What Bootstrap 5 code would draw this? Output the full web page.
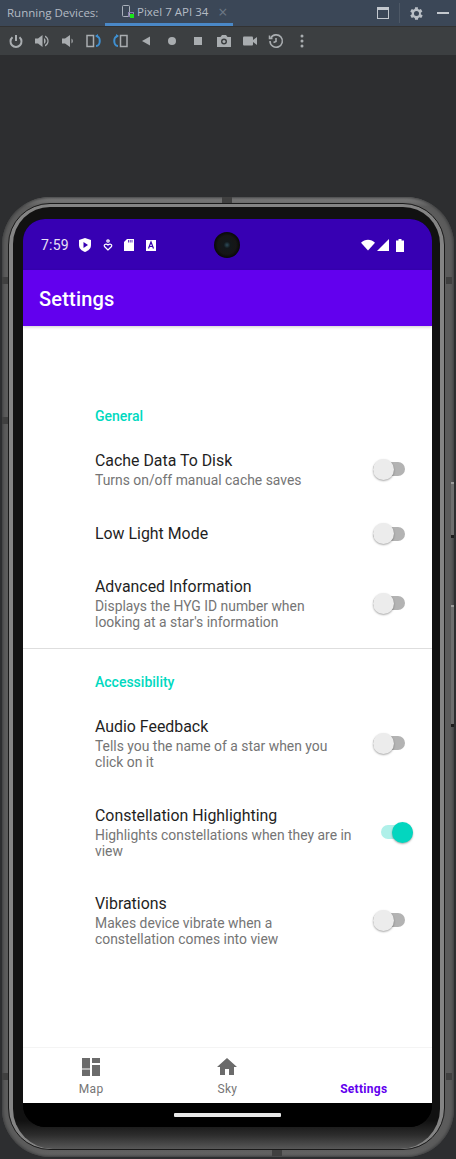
<!DOCTYPE html>
<html lang="en">
<head>
    <meta charset="UTF-8">
    <meta name="viewport" content="width=device-width, initial-scale=1.0">
    <title>Settings</title>
    <link href="https://cdn.jsdelivr.net/npm/bootstrap@5.3.0/dist/css/bootstrap.min.css" rel="stylesheet">
    <style>
        html, body { height: 100%; }
        body { width: 456px; height: 1159px; overflow: hidden; background: #2d2e30; font-family: Roboto, sans-serif; }

        /* IDE chrome */
        .ide-tabs { height: 26px; background: #3b4757; color: #b4bbc4; font-family: "Open Sans", sans-serif; font-size: 11.5px; }
        .ide-label { width: 105px; padding-left: 7px; }
        .ide-tab { width: 128px; height: 26px; border-bottom: 3px solid #4a88c7; padding-left: 16px; gap: 2px; }
        .ide-tab-x { color: #6d7885; margin-left: 8px; font-size: 16px; line-height: 16px; }
        .ide-right { margin-left: auto; gap: 10px; padding-right: 7px; }
        .ide-sep { width: 1px; height: 20px; background: #4d5866; }
        .ide-tools { height: 29px; background: #3c3f41; padding-left: 8px; gap: 10px; border-top: 1px solid #323232; }
        .ide-tools svg { width: 16px; height: 16px; flex: none; }

        /* phone */
        .phone-wrap { padding: 142px 2px 0 2px; }
        .phone-shell { height: 960px; padding: 6px 9px 7px 6px; border-radius: 48px; background: linear-gradient(to bottom, #858585 0, #5c5c5c 1%, #5c5c5c 99%, #666 100%); box-shadow: inset 0 0 3px 1px #3c3d3e; position: relative; }
        .phone-line { height: 947px; border: 1px solid #1a1a1a; border-radius: 42px; background: #848484; padding: 3px 4px 0 4px; overflow: hidden; }
        .phone-bezel { height: 942px; padding: 12px 8px 0 10px; border-radius: 37px 37px 40px 40px; background: linear-gradient(to bottom, #111 0, #111 97%, #2c2c2c 98.500%, #585858 100%); }
        .phone-screen { height: 908px; width: 409px; border-radius: 22px; overflow: hidden; background: #000; position: relative; }

        .shell-rail { position: absolute; right: 0; width: 3px; background: #6e6e6e; border-top: 2px solid #9a9a9a; border-bottom: 3px solid #1c1c1c; }
        .rail-upper { top: 285px; height: 56px; }
        .rail-lower { top: 408px; height: 122px; }
        .shell-notch { position: absolute; background: #404040; }
        .notch-top { left: 220px; top: 0; width: 10px; height: 6px; }
        .notch-bottom { left: 270px; bottom: 1px; width: 10px; height: 6px; }
        .notch-left-a { left: 0; top: 80px; width: 6px; height: 7px; }
        .notch-left-b { left: 0; top: 220px; width: 6px; height: 7px; }
        .notch-left-c { left: 0; top: 876px; width: 6px; height: 7px; }
        .notch-right-a { right: 2px; top: 80px; width: 6px; height: 7px; }
        .notch-right-c { right: 2px; top: 876px; width: 6px; height: 7px; }

        .status-row { height: 51px; background: #3700b3; color: #e8e0f6; padding: 1px 28px 0 18px; font-size: 14px; position: relative; }
        .status-time { width: 35px; letter-spacing: .2px; }
        .status-icons { gap: 11.5px; margin-left: 3px; }
        .status-icons svg, .status-right svg { display: block; }
        .status-right { margin-left: auto; gap: 2px; }
        .status-batt { margin-left: 5px; }
        .punch-hole { position: absolute; left: 191px; top: 13px; width: 26px; height: 26px; border-radius: 50%; background: radial-gradient(circle, #2e4c5a 0, #12181b 18%, #161616 50%, #050505 75%, #000 100%); }
        .app-title { height: 56px; background: #6200ee; color: #fff; font-size: 20px; font-weight: 500; letter-spacing: .2px; padding: 2px 0 0 16px; box-shadow: 0 1px 3px rgba(0,0,0,.2); position: relative; z-index: 1; }

        .settings-body { height: 721px; background: #fff; padding-top: 78px; }
        .group-title { color: #00d9c0; font-size: 14px; font-weight: 500; line-height: 24px; padding-left: 72px; }
        .pref-row { padding-left: 72px; }
        .pref-title { font-size: 15.900px; line-height: 20px; color: #1f1f1f; }
        .pref-sub { font-size: 13.900px; line-height: 16px; color: #757575; margin-top: 1px; padding-right: 4px; }
        .pref-text { width: 262px; padding-top: 1px; }
        .m-cache { margin-top: 22px; }
        .m-low { margin-top: 35px; }
        .m-adv { margin-top: 32px; }
        .m-audio { margin-top: 22px; }
        .m-const { margin-top: 35px; }
        .m-vib { margin-top: 34px; }
        .pref-rule { border: 0; border-top: 1px solid #dedede; opacity: 1; margin: 18px 0 0; }
        .acc-gap { margin-top: 21px; }

        .toggle-box { width: 32px; height: 14px; border-radius: 7px; background: #b3b3b3; position: relative; margin-left: 16px; flex: none; }
        .toggle-box::after { content: ""; position: absolute; left: 0; top: -3.500px; width: 21px; height: 21px; border-radius: 50%; background: #ececec; box-shadow: 0 1px 2px rgba(0,0,0,.35); }
        .toggle-on { background: #aff0e9; margin-left: 24px; }
        .toggle-on::after { left: 11px; background: #03d6bf; }

        .tab-row { height: 56px; background: #fff; border-top: 1px solid #f4f4f4; }
        .tab-cell { width: 33.33%; color: #757575; font-size: 12px; line-height: 14px; letter-spacing: .3px; padding-top: 9px; }
        .tab-cell svg { display: block; margin-bottom: 5px; }
        .tab-active { color: #6200ee; font-weight: 700; padding-top: 34px; }
        .home-strip { height: 24px; background: #000; padding-top: 10px; }
        .home-pill { width: 107px; height: 4px; border-radius: 1px; background: #e8e8e8; }
    </style>
</head>
<body>
    <!-- Android Studio panel -->
    <div class="ide-tabs d-flex align-items-center">
        <div class="ide-label">Running Devices:</div>
        <div class="ide-tab d-flex align-items-center">
            <svg width="14" height="14" viewBox="0 0 14 14" fill="none" stroke="#aab2bc"><rect x="1.500" y="0.500" width="7" height="11" rx="1"/><rect x="7.500" y="7.500" width="5" height="4" stroke="#8a7fb0"/><rect x="9" y="9" width="4" height="4" fill="#19e619" stroke="none"/></svg>
            <span>Pixel 7 API 34</span>
            <span class="ide-tab-x">&#215;</span>
        </div>
        <div class="ide-right d-flex align-items-center">
            <svg width="12" height="12" viewBox="0 0 12 12" fill="none" stroke="#c3c8ce"><rect x="0.500" y="0.500" width="11" height="11"/><rect x="0.500" y="0.500" width="11" height="2" fill="#c3c8ce"/></svg>
            <div class="ide-sep"></div>
            <svg width="13" height="13" viewBox="3 3 18 18" fill="#b9bfc6"><path d="M19.400 13a7.500 7.500 0 0 0 0-2l2.100-1.600-2-3.500-2.500 1a7.500 7.500 0 0 0-1.700-1L15.400 3.200h-4L11 5.900a7.500 7.500 0 0 0-1.700 1l-2.500-1-2 3.500L6.900 11a7.500 7.500 0 0 0 0 2l-2.100 1.600 2 3.500 2.500-1a7.500 7.500 0 0 0 1.700 1l.4 2.700h4l.4-2.700a7.500 7.500 0 0 0 1.700-1l2.500 1 2-3.500zM13.400 15.500a3.500 3.500 0 1 1 0-7 3.500 3.500 0 0 1 0 7z" transform="translate(-1.400 0)" fill-rule="evenodd"/></svg>
            <svg class="ms-1" width="12" height="12" viewBox="0 0 12 12"><rect x="0" y="5" width="12" height="2" fill="#c3c8ce"/></svg>
        </div>
    </div>
    <div class="ide-tools d-flex align-items-center">
        <svg viewBox="0 0 16 16" fill="none" stroke="#a9adb0" stroke-width="2"><path d="M8 2v6"/><path d="M4.500 4.200a5.500 5.500 0 1 0 7 0"/></svg>
        <svg viewBox="0 0 16 16" fill="#a9adb0"><path d="M1 5.500h3L8.500 2v12L4 10.500H1z"/><path d="M10 5a3.500 3.500 0 0 1 0 6zM11 2.500a6 6 0 0 1 0 11v-1.500a4.500 4.500 0 0 0 0-8z"/></svg>
        <svg viewBox="0 0 16 16" fill="#a9adb0"><path d="M2 5.500h3L10 2v12l-5-3.500H2zM11.500 5.500a3 3 0 0 1 0 5z"/></svg>
        <svg viewBox="0 0 16 16" fill="none"><rect x="1" y="2.500" width="6.500" height="11" stroke="#a9adb0" stroke-width="1.500"/><path d="M10 3c5 0 5 10 0 10" stroke="#3f8fd0" stroke-width="2"/><path d="M9 3l3-2v4z" fill="#3f8fd0"/></svg>
        <svg viewBox="0 0 16 16" fill="none"><rect x="8.500" y="2.500" width="6.500" height="11" stroke="#a9adb0" stroke-width="1.500"/><path d="M6 3c-5 0-5 10 0 10" stroke="#3f8fd0" stroke-width="2"/><path d="M7 3L4 1v4z" fill="#3f8fd0"/></svg>
        <svg viewBox="0 0 16 16" fill="#a9adb0"><path d="M4 8l8-4.500v9z"/></svg>
        <svg viewBox="0 0 16 16" fill="#a9adb0"><circle cx="8" cy="8" r="4"/></svg>
        <svg viewBox="0 0 16 16" fill="#a9adb0"><rect x="4" y="4" width="8" height="8"/></svg>
        <svg viewBox="0 0 16 16" fill="#a9adb0"><path fill-rule="evenodd" d="M1 4h3.500L6 2h4l1.500 2H15v10H1zM8 5.500a3 3 0 1 0 0 6 3 3 0 0 0 0-6z"/><circle cx="8" cy="8.500" r="1.500"/></svg>
        <svg viewBox="0 0 16 16" fill="#a9adb0"><rect x="1" y="3.500" width="10" height="9" rx="1"/><path d="M11 7l4-3v8l-4-3z"/></svg>
        <svg viewBox="0 0 16 16" fill="none" stroke="#a9adb0" stroke-width="1.600"><path d="M2.800 5A6.200 6.200 0 1 1 2 8"/><path d="M1.500 2.500v3h3" stroke-width="1.500"/><path d="M8 5v3.500l-2.500 1"/></svg>
        <svg viewBox="0 0 16 16" fill="#a9adb0"><circle cx="8" cy="3" r="1.500"/><circle cx="8" cy="8" r="1.500"/><circle cx="8" cy="13" r="1.500"/></svg>
    </div>

    <!-- Emulator -->
    <div class="phone-wrap">
        <div class="phone-shell">
            <div class="shell-notch notch-top"></div>
            <div class="shell-notch notch-bottom"></div>
            <div class="shell-notch notch-left-a"></div>
            <div class="shell-notch notch-left-b"></div>
            <div class="shell-notch notch-left-c"></div>
            <div class="shell-notch notch-right-a"></div>
            <div class="shell-notch notch-right-c"></div>
            <div class="shell-rail rail-upper"></div>
            <div class="shell-rail rail-lower"></div>
            <div class="phone-line">
                <div class="phone-bezel">
                    <div class="phone-screen">
                        <div class="status-row d-flex align-items-center">
                            <div class="status-time">7:59</div>
                            <div class="status-icons d-flex align-items-center">
                                <svg width="12" height="14" viewBox="0 0 12 14"><path d="M6 0l6 2v5c0 3.500-2.500 5.700-6 7-3.500-1.300-6-3.500-6-7V2z" fill="#fff"/><path d="M4.500 4v6L9 7z" fill="#3700b3"/></svg>
                                <svg width="10" height="12" viewBox="0 0 10 12" fill="none" stroke="#fff" stroke-width="1.200"><circle cx="5" cy="2" r="1.200"/><path d="M5 11L1.500 7.500C.5 6 2.500 4 5 6c2.500-2 4.500 0 3.500 1.500z"/></svg>
                                <svg width="10" height="12" viewBox="0 0 10 12" fill="#fff"><path d="M3 0h7v12H0V3z"/><path d="M4.500 1v2.500M6.200 1v2.500M8 1v2.500" stroke="#3700b3" stroke-width=".8"/></svg>
                                <svg width="10" height="11" viewBox="0 0 10 11"><rect width="10" height="11" fill="#fff"/><path d="M2.500 8.500L5 2l2.500 6.500M3.500 6.500h3" stroke="#3700b3" stroke-width="1.200" fill="none"/></svg>
                            </div>
                            <div class="punch-hole"></div>
                            <div class="status-right d-flex align-items-center">
                                <svg width="14" height="12" viewBox="0 0 15 12" fill="#fff"><path d="M0 3.500C4-.7 11-.7 15 3.500L7.500 12z"/></svg>
                                <svg width="12" height="12" viewBox="0 0 12 12" fill="#fff"><path d="M12 0v12H0z"/></svg>
                                <svg class="status-batt" width="8" height="13" viewBox="0 0 8 13" fill="#fff"><path d="M2.500 0h3v1.500H8V13H0V1.500h2.500z"/></svg>
                            </div>
                        </div>
                        <div class="app-title d-flex align-items-center">Settings</div>

                        <div class="settings-body">
                            <div class="group-title">General</div>
                            <div class="pref-row m-cache d-flex align-items-center">
                                <div class="pref-text">
                                    <div class="pref-title">Cache Data To Disk</div>
                                    <div class="pref-sub">Turns on/off manual cache saves</div>
                                </div>
                                <div class="toggle-box"></div>
                            </div>
                            <div class="pref-row m-low d-flex align-items-center">
                                <div class="pref-text">
                                    <div class="pref-title">Low Light Mode</div>
                                </div>
                                <div class="toggle-box"></div>
                            </div>
                            <div class="pref-row m-adv d-flex align-items-center">
                                <div class="pref-text">
                                    <div class="pref-title">Advanced Information</div>
                                    <div class="pref-sub">Displays the HYG ID number when looking at a star's information</div>
                                </div>
                                <div class="toggle-box"></div>
                            </div>
                            <hr class="pref-rule">
                            <div class="group-title acc-gap">Accessibility</div>
                            <div class="pref-row m-audio d-flex align-items-center">
                                <div class="pref-text">
                                    <div class="pref-title">Audio Feedback</div>
                                    <div class="pref-sub">Tells you the name of a star when you click on it</div>
                                </div>
                                <div class="toggle-box"></div>
                            </div>
                            <div class="pref-row m-const d-flex align-items-center">
                                <div class="pref-text">
                                    <div class="pref-title">Constellation Highlighting</div>
                                    <div class="pref-sub">Highlights constellations when they are in view</div>
                                </div>
                                <div class="toggle-box toggle-on"></div>
                            </div>
                            <div class="pref-row m-vib d-flex align-items-center">
                                <div class="pref-text">
                                    <div class="pref-title">Vibrations</div>
                                    <div class="pref-sub">Makes device vibrate when a constellation comes into view</div>
                                </div>
                                <div class="toggle-box"></div>
                            </div>
                        </div>

                        <div class="tab-row d-flex">
                            <div class="tab-cell d-flex flex-column align-items-center">
                                <svg width="20" height="20" viewBox="0 0 20 20" fill="#6b6b6b"><rect x="1" y="1" width="8" height="10.500"/><rect x="1" y="12.500" width="8" height="6.500"/><rect x="11" y="1" width="8" height="5"/><rect x="11" y="8" width="8" height="11"/></svg>
                                Map
                            </div>
                            <div class="tab-cell d-flex flex-column align-items-center">
                                <svg width="20" height="20" viewBox="0 0 20 20" fill="#6b6b6b"><path d="M8 18v-6h4v6h5v-8h3L10 1 0 10h3v8z"/></svg>
                                Sky
                            </div>
                            <div class="tab-cell tab-active d-flex flex-column align-items-center">Settings</div>
                        </div>
                        <div class="home-strip d-flex justify-content-center">
                            <div class="home-pill"></div>
                        </div>
                    </div>
                </div>
            </div>
        </div>
    </div>

    <script src="https://cdn.jsdelivr.net/npm/bootstrap@5.3.0/dist/js/bootstrap.bundle.min.js"></script>
</body>
</html>
